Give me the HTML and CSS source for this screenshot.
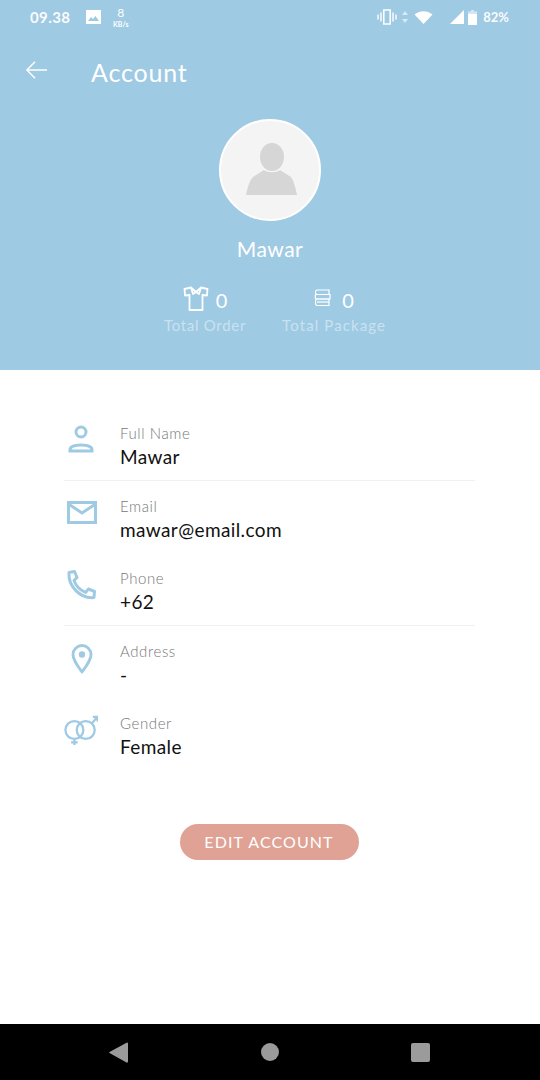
FILE: index.html
```html
<!DOCTYPE html>
<html>
<head>
  <meta charset="utf-8">
  <title>Account</title>
  <link rel="stylesheet" href="styles.css">
</head>
<body>
<div class="screen">
  <div class="header">
    <div class="statusBar">
      <div class="statusLeft">
        <span class="clock">09.38</span>
        <svg class="picIcon" viewBox="0 0 15 14"><path fill="#fff" d="M0 0H15V14H0Z"/><path fill="#9fcae3" d="M2 11 5 7 7 9 9.500 6 13 11Z"/></svg>
        <span class="speed"><b>8</b><i>KB/s</i></span>
      </div>
      <div class="statusRight">
        <svg class="vibIcon" viewBox="0 0 20 16"><path fill="none" stroke="#fff" stroke-width="1.500" d="M6.800 1H13.200V15H6.800Z"/><path fill="none" stroke="#fff" stroke-width="1.400" d="M4 3.500V12.500M16 3.500V12.500M1 5.500V10.500M19 5.500V10.500"/></svg>
        <svg class="arrowsIcon" viewBox="0 0 6 12"><path fill="#fff" opacity=".6" d="M3 0 6 4H0ZM3 12 0 8H6Z"/></svg>
        <svg class="wifiIcon" viewBox="0 0 18 13"><path fill="#fff" d="M0 3.500C5 -1 13 -1 18 3.500L9 13Z"/></svg>
        <svg class="signalIcon" viewBox="0 0 14 14"><path fill="#fff" d="M14 0V14H0Z"/></svg>
        <svg class="batteryIcon" viewBox="0 0 9 15"><path fill="#fff" opacity=".55" d="M3 0H6V1.500H9V5H0V1.500H3Z"/><path fill="#fff" d="M0 4H9V15H0Z"/></svg>
        <span class="percent">82%</span>
      </div>
    </div>
    <div class="appBar">
      <svg class="backIcon" viewBox="0 0 24 20"><path fill="none" stroke="#fff" stroke-width="1.500" d="M23 10H2M10.500 1.500 2 10 10.500 18.500"/></svg>
      <h1>Account</h1>
    </div>
    <div class="avatar">
      <svg viewBox="0 0 54 54"><ellipse cx="27" cy="14" rx="12" ry="14" fill="#d6d6d6"/><path fill="#d6d6d6" d="M19 27C22 30 32 30 35 27L46 34C49 38 51 47 52 52H1C2 47 4 38 8 34Z"/></svg>
    </div>
    <div class="userName">Mawar</div>
    <div class="stats">
      <div class="stat">
        <div class="statTop">
          <svg class="shirtIcon" viewBox="0 0 26 25"><g fill="none" stroke="#fff" stroke-width="1.800" stroke-linejoin="round"><path d="M8 1.500 1.500 3 2 9.500 6.500 9V24H19.500V9L24 9.500 24.500 3 18 1.500 13 6Z"/><path d="M8 1.500 10 8 13 6 16 8 18 1.500"/></g></svg>
          <span class="statNum">0</span>
        </div>
        <div class="statLabel">Total Order</div>
      </div>
      <div class="stat">
        <div class="statTop">
          <svg class="packIcon" viewBox="0 0 17 18"><g fill="none" stroke="#fff" stroke-width="1.200"><path d="M3 1H15V5.500H3C1 5.500 1 1 3 1Z"/><path d="M2 5.500H16V10H2C1 10 1 5.500 2 5.500Z"/><path d="M3 10H15V16.500H3C1 16.500 1 10 3 10Z"/><path d="M3 13H15"/></g></svg>
          <span class="statNum">0</span>
        </div>
        <div class="statLabel">Total Package</div>
      </div>
    </div>
  </div>

  <div class="content">
    <div class="infoList">
      <div class="infoRow line">
        <svg class="rowIcon" viewBox="0 0 34 34"><g fill="none" stroke="#9fcae3" stroke-width="3"><circle cx="17" cy="9" r="5"/><path d="M6 27C6 23 12 22 17 22S28 23 28 27V28H6Z"/></g></svg>
        <div class="rowText"><span class="rowLabel">Full Name</span><span class="rowValue">Mawar</span></div>
      </div>
      <div class="infoRow">
        <svg class="rowIcon" viewBox="0 0 34 34"><g fill="none" stroke="#9fcae3" stroke-width="3"><path d="M4.500 6.500H31.500V26.500H4.500Z"/><path d="M4.500 8 18 17 31.500 8"/></g></svg>
        <div class="rowText"><span class="rowLabel">Email</span><span class="rowValue">mawar@email.com</span></div>
      </div>
      <div class="infoRow line">
        <svg class="rowIcon" viewBox="0 0 34 34"><path fill="none" stroke="#9fcae3" stroke-width="3" stroke-linejoin="round" d="M5 4.500 10.500 3.500 13 9.500 10 12.500C12 18 16 22 21.500 24.500L24.500 21 30.500 23.500 30 29.500C16 31 4 18 5 4.500Z"/></svg>
        <div class="rowText"><span class="rowLabel">Phone</span><span class="rowValue">+62</span></div>
      </div>
      <div class="infoRow">
        <svg class="rowIcon" viewBox="0 0 34 34"><path fill="none" stroke="#9fcae3" stroke-width="2.800" stroke-linejoin="round" d="M18 31C13 24 9 19 9 13.500A9 9 0 0 1 27 13.500C27 19 23 24 18 31Z"/><circle cx="18" cy="13.500" r="3.200" fill="#9fcae3"/></svg>
        <div class="rowText"><span class="rowLabel">Address</span><span class="rowValue">-</span></div>
      </div>
      <div class="infoRow">
        <svg class="rowIcon" viewBox="0 0 36 34"><g fill="none" stroke="#9fcae3" stroke-width="2.400"><circle cx="11" cy="17" r="9.500"/><circle cx="23" cy="17" r="9.500"/><path d="M11 26.500V33M7.500 30H14.500M29.500 10 35 3.500M30.500 3H35.500V8"/></g></svg>
        <div class="rowText"><span class="rowLabel">Gender</span><span class="rowValue">Female</span></div>
      </div>
    </div>
    <div class="editWrap"><div class="editButton">EDIT ACCOUNT</div></div>
  </div>

  <div class="navBar">
    <svg class="navBack" viewBox="0 0 19 21"><path fill="#9b9b9b" d="M18 .500C18.500 .500 19 1 19 1.500V19.500C19 20.500 18 21 17.500 20.500L.500 11C0 10.700 0 10.200 .500 10Z"/></svg>
    <div class="navHome"></div>
    <div class="navRecent"></div>
  </div>
</div>
</body>
</html>
```

FILE: styles.css
```css
html, body {margin:0;padding:0;background-color:white;}
body {font-family:"Lato","Noto Sans",sans-serif;}
.screen {width:540px;height:1080px;display:flex;flex-direction:column;overflow:hidden;}

.header {height:370px;background-color:#9fcae3;color:white;display:flex;flex-direction:column;align-items:center;flex:none;}
.statusBar {width:100%;box-sizing:border-box;height:34px;padding:0 31px 0 30px;display:flex;justify-content:space-between;align-items:center;}
.statusLeft, .statusRight {display:flex;align-items:center;}
.clock {font-size:15px;font-weight:700;letter-spacing:.4px;width:56px;opacity:.95;}
.picIcon {width:15px;height:14px;margin-right:12px;}
.speed {display:flex;flex-direction:column;align-items:center;}
.speed b {font-size:12px;line-height:15px;font-weight:400;}
.speed i {font-size:7px;line-height:9px;font-style:normal;font-weight:700;}
.vibIcon {width:20px;height:16px;margin-right:5px;}
.arrowsIcon {width:6px;height:12px;margin-right:6px;}
.wifiIcon {width:19px;height:13px;margin-right:17px;}
.signalIcon {width:14px;height:14px;margin-right:4px;}
.batteryIcon {width:9px;height:15px;margin-right:6px;}
.percent {font-size:13px;font-weight:700;opacity:.95;}

.appBar {width:100%;height:70px;display:flex;align-items:center;box-sizing:border-box;padding:5px 0 0 25px;}
.backIcon {width:23px;height:20px;margin:-3px 43px 0 0;}
.appBar h1 {margin:0;font-size:25px;font-weight:400;letter-spacing:.8px;}

.avatar {width:98px;height:98px;margin-top:15px;border:2px solid white;border-radius:50%;background-color:#f4f4f4;display:flex;align-items:center;justify-content:center;}
.avatar svg {width:54px;height:54px;margin-left:4px;}
.userName {margin-top:16px;font-size:21px;line-height:24px;letter-spacing:.5px;}

.stats {display:flex;margin-top:23px;margin-left:10px;gap:36px;}
.stat {display:flex;flex-direction:column;align-items:center;}
.statTop {display:flex;align-items:center;height:32px;}
.shirtIcon {width:26px;height:25px;margin:-3px 7px 0 0;}
.packIcon {width:17px;height:18px;margin:-4px 11px 0 0;}
.statNum {font-size:20px;}
.statLabel {font-size:15px;line-height:18px;letter-spacing:.7px;color:#c9e2f0;}
.stat:last-child .statLabel {letter-spacing:1.100px;}

.content {flex:1;display:flex;flex-direction:column;}
.infoList {margin:38px 65px 0 64px;}
.infoRow {height:72.500px;box-sizing:border-box;padding-top:15px;display:flex;}
.infoRow.line {border-bottom:1px solid #f1f1f1;}
.rowIcon {width:34px;height:34px;flex:none;margin-right:22px;}
.rowText {display:flex;flex-direction:column;}
.rowLabel {font-size:15px;font-weight:300;line-height:20px;color:#777;letter-spacing:.6px;}
.rowValue {font-size:19px;line-height:26px;margin-top:1px;color:#111;letter-spacing:.4px;}

.editWrap {display:flex;justify-content:center;margin-top:53px;padding-right:2px;}
.editButton {width:179px;height:36px;border-radius:18px;background-color:#e0a294;color:white;font-size:16px;letter-spacing:1.100px;display:flex;align-items:center;justify-content:center;}

.navBar {height:56px;flex:none;background-color:black;display:flex;align-items:center;justify-content:space-between;box-sizing:border-box;padding:0 110px 0 109px;}
.navBack {width:19px;height:21px;}
.navHome {width:18px;height:18px;border-radius:50%;background-color:#9b9b9b;}
.navRecent {width:19px;height:19px;border-radius:2px;background-color:#9b9b9b;}
```
